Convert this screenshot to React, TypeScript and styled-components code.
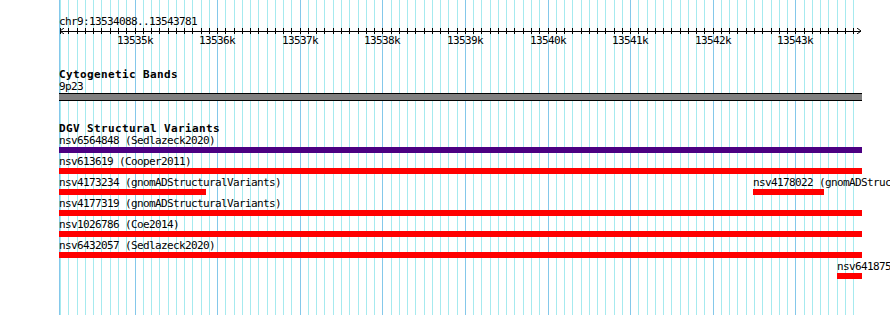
import React from 'react'
import styled, { createGlobalStyle } from 'styled-components'

const GlobalStyle = createGlobalStyle`
  html, body {
    margin: 0;
    padding: 0;
    background: #ffffff;
  }
`

// view geometry (px on screen)
const VIEW_LEFT = 59
const VIEW_WIDTH = 803
const PX_PER_BP = 0.0826
const REF_BP = 13535000
const REF_X = 135
const FIRST_TICK = 13534100
const LAST_TICK = 13543700

const bpToX = (bp: number) => REF_X + (bp - REF_BP) * PX_PER_BP

const Frame = styled.div`
  position: relative;
  width: 890px;
  height: 315px;
  overflow: hidden;
  background: #ffffff;
  color: #000000;
  font-family: "DejaVu Sans Mono", "Liberation Mono", monospace;
  font-size: 11px;
`

const GridLayer = styled.svg`
  position: absolute;
  left: 0;
  top: 0;
`

const View = styled.div`
  position: relative;
  margin-left: ${VIEW_LEFT}px;
  width: ${VIEW_WIDTH}px;
  padding-top: 15px;
  display: flex;
  flex-direction: column;
`

const Text = styled.div<{ $bold?: boolean; $lh?: number }>`
  font-weight: ${(p) => (p.$bold ? 700 : 400)};
  letter-spacing: ${(p) => (p.$bold ? '0.38px' : '-0.62px')};
  line-height: ${(p) => p.$lh ?? 13}px;
  white-space: nowrap;
`

const Axis = styled.svg`
  display: block;
`

const ScaleLabels = styled.div`
  position: relative;
  height: 13px;
`

const ScaleLabel = styled.span<{ $x: number }>`
  position: absolute;
  top: 0;
  left: ${(p) => p.$x}px;
  transform: translateX(-50%);
  line-height: 13px;
  letter-spacing: -0.62px;
  white-space: nowrap;
`

const Track = styled.section`
  margin-top: 21px;
  display: flex;
  flex-direction: column;
`

const Band = styled.div`
  height: 6px;
  border-top: 1px solid #000000;
  border-bottom: 1px solid #000000;
  background: #808080;
`

const FeatureRow = styled.div`
  position: relative;
  height: 21px;
`

const Feature = styled.div<{ $left: number; $width: number }>`
  position: absolute;
  top: 0;
  left: ${(p) => p.$left}px;
  width: ${(p) => p.$width}px;
`

const Bar = styled.div<{ $color: string }>`
  height: 6px;
  background: ${(p) => p.$color};
`

type Feat = { id: string; label: string; left: number; width: number; color: string }

const rows: Feat[][] = [
  [{ id: 'a', label: 'nsv6564848 (Sedlazeck2020)', left: 0, width: 803, color: '#4b0082' }],
  [{ id: 'b', label: 'nsv613619 (Cooper2011)', left: 0, width: 803, color: '#ff0000' }],
  [
    { id: 'c', label: 'nsv4173234 (gnomADStructuralVariants)', left: 0, width: 147, color: '#ff0000' },
    { id: 'd', label: 'nsv4178022 (gnomADStructuralVariants)', left: 694, width: 71, color: '#ff0000' },
  ],
  [{ id: 'e', label: 'nsv4177319 (gnomADStructuralVariants)', left: 0, width: 803, color: '#ff0000' }],
  [{ id: 'f', label: 'nsv1026786 (Coe2014)', left: 0, width: 803, color: '#ff0000' }],
  [{ id: 'g', label: 'nsv6432057 (Sedlazeck2020)', left: 0, width: 803, color: '#ff0000' }],
  [{ id: 'h', label: 'nsv6418755 (Sedlazeck2020)', left: 778, width: 25, color: '#ff0000' }],
]

const ticks: number[] = []
for (let bp = FIRST_TICK; bp <= LAST_TICK; bp += 100) ticks.push(bp)

function Grid() {
  return (
    <GridLayer width={890} height={315} shapeRendering="crispEdges">
      <rect x={VIEW_LEFT} y={0} width={1} height={315} fill="#84c8ea" />
      {ticks.map((bp) => (
        <rect
          key={bp}
          x={Math.floor(bpToX(bp))}
          y={0}
          width={1}
          height={315}
          fill={bp % 1000 === 0 ? '#84c8ea' : '#a6eaef'}
        />
      ))}
    </GridLayer>
  )
}

function Ruler() {
  const majors = ticks.filter((bp) => bp % 1000 === 0)
  return (
    <>
      <Text>chr9:13534088..13543781</Text>
      <Axis width={VIEW_WIDTH} height={6} shapeRendering="crispEdges">
        <rect x={1} y={3} width={801} height={1} fill="#000" />
        {ticks.map((bp) => (
          <rect key={bp} x={Math.floor(bpToX(bp)) - VIEW_LEFT} y={0} width={1} height={6} fill="#000" />
        ))}
        <path d="M5 0 L1 3 L5 6" fill="none" stroke="#000" strokeWidth={1} shapeRendering="auto" />
        <path d="M798 0 L802 3 L798 6" fill="none" stroke="#000" strokeWidth={1} shapeRendering="auto" />
      </Axis>
      <ScaleLabels>
        {majors.map((bp) => (
          <ScaleLabel key={bp} $x={Math.floor(bpToX(bp)) - VIEW_LEFT}>
            {bp / 1000}k
          </ScaleLabel>
        ))}
      </ScaleLabels>
    </>
  )
}

export default function App(): React.ReactElement {
  return (
    <>
      <GlobalStyle />
      <Frame>
        <Grid />
        <View>
          <Ruler />
          {/* Cytogenetic bands */}
          <Track>
            <Text $bold>Cytogenetic Bands</Text>
            <Text $lh={12}>9p23</Text>
            <Band />
          </Track>
          {/* structural variants */}
          <Track>
            <Text $bold>DGV Structural Variants</Text>
            {rows.map((row, i) => (
              <FeatureRow key={i}>
                {row.map((f) => (
                  <Feature key={f.id} $left={f.left} $width={f.width}>
                    <Text $lh={12}>{f.label}</Text>
                    <Bar $color={f.color} />
                  </Feature>
                ))}
              </FeatureRow>
            ))}
          </Track>
        </View>
      </Frame>
    </>
  )
}
